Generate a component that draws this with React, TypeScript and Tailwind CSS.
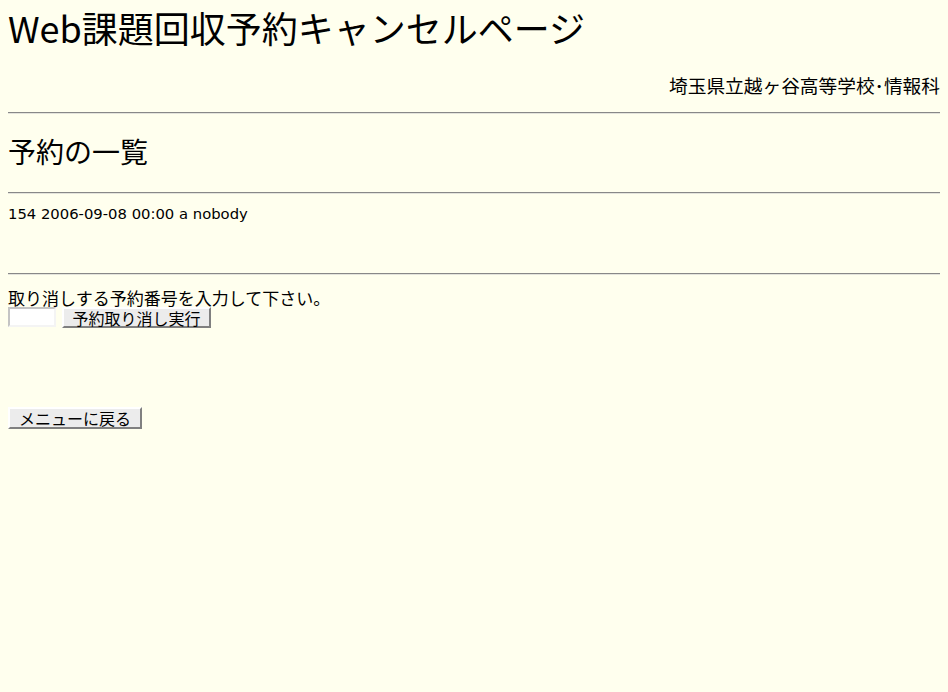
export default function App() {
  const jp = "font-['Noto_Sans_CJK_JP',_'DejaVu_Sans',_sans-serif]";
  return (
    <div className={`min-h-[692px] w-full bg-[#ffffee] px-2 text-black ${jp}`}>
      <h1 className="h-[54px] text-[36px] leading-[54px] font-normal whitespace-nowrap">
        Web課題回収予約キャンセルページ
      </h1>
      <p className="mt-[20px] text-right text-[18.7px] leading-[22px] whitespace-nowrap">
        埼玉県立越ヶ谷高等学校･情報科
      </p>

      <hr className="mt-[16px] h-[2px] border-0 border-t border-b border-t-[#888888] border-b-[#e4e4dc]" />

      <h2 className="mt-[19px] text-[28px] leading-[36px] font-normal">予約の一覧</h2>

      <hr className="mt-[23px] h-[2px] border-0 border-t border-b border-t-[#888888] border-b-[#e4e4dc]" />

      <div className="mt-[10px] font-['DejaVu_Sans',_sans-serif] text-[14.8px] leading-[20px]">
        154 2006-09-08 00:00 a nobody
      </div>

      <hr className="mt-[49px] h-[2px] border-0 border-t border-b border-t-[#888888] border-b-[#e4e4dc]" />

      <form className="mt-[13px]" onSubmit={(e) => e.preventDefault()}>
        <div className="h-[19px] text-[17px] leading-[19px] whitespace-nowrap">
          取り消しする予約番号を入力して下さい。
        </div>
        <div className="flex h-[21px] items-start gap-[6px]">
          <input
            type="text"
            className="h-[20px] w-[48px] border-2 border-t-[#c4c4c4] border-l-[#c4c4c4] border-b-[#f4f4f4] border-r-[#f4f4f4] bg-white px-1 text-[14px] outline-none"
          />
          <button
            type="submit"
            className="h-[21px] w-[149px] border-2 border-t-white border-l-white border-b-[#808080] border-r-[#808080] bg-[#ececec] text-[16px] leading-[16px]"
          >
            予約取り消し実行
          </button>
        </div>
      </form>

      <button
        type="button"
        className="mt-[79px] h-[22px] w-[134px] border-2 border-t-white border-l-white border-b-[#808080] border-r-[#808080] bg-[#ececec] text-[16px] leading-[16px]"
      >
        メニューに戻る
      </button>
    </div>
  );
}
